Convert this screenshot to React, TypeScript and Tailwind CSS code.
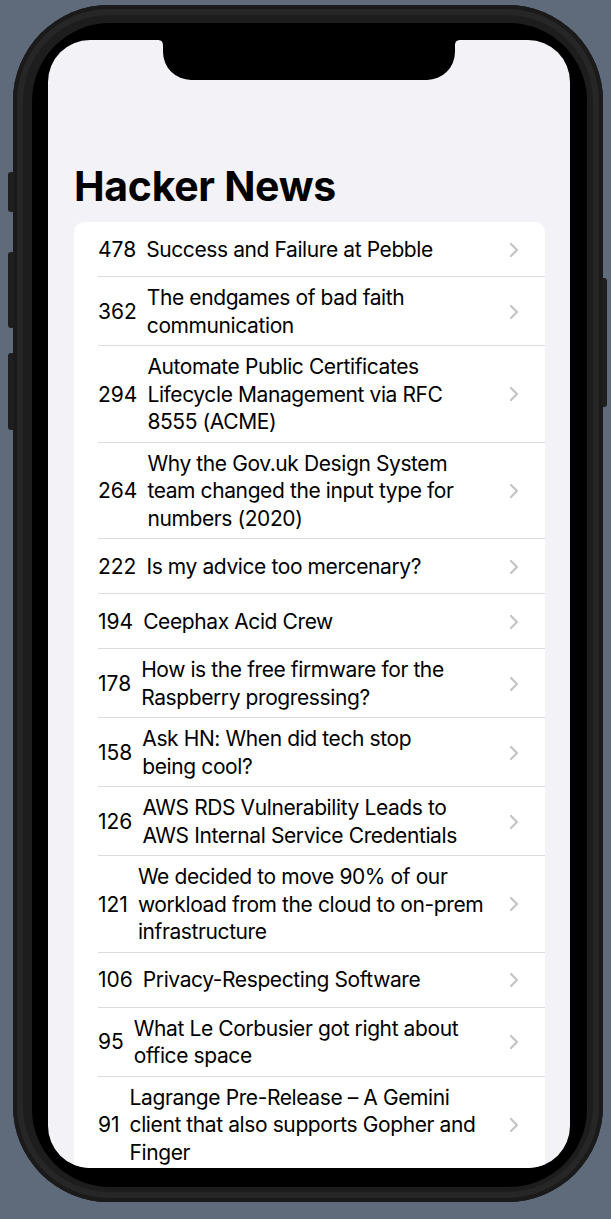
type Story = {
  score: number;
  lines: string[];
};

const stories: Story[] = [
  { score: 478, lines: ["Success and Failure at Pebble"] },
  { score: 362, lines: ["The endgames of bad faith", "communication"] },
  {
    score: 294,
    lines: [
      "Automate Public Certificates",
      "Lifecycle Management via RFC",
      "8555 (ACME)",
    ],
  },
  {
    score: 264,
    lines: [
      "Why the Gov.uk Design System",
      "team changed the input type for",
      "numbers (2020)",
    ],
  },
  { score: 222, lines: ["Is my advice too mercenary?"] },
  { score: 194, lines: ["Ceephax Acid Crew"] },
  {
    score: 178,
    lines: ["How is the free firmware for the", "Raspberry progressing?"],
  },
  { score: 158, lines: ["Ask HN: When did tech stop", "being cool?"] },
  {
    score: 126,
    lines: ["AWS RDS Vulnerability Leads to", "AWS Internal Service Credentials"],
  },
  {
    score: 121,
    lines: [
      "We decided to move 90% of our",
      "workload from the cloud to on-prem",
      "infrastructure",
    ],
  },
  { score: 106, lines: ["Privacy-Respecting Software"] },
  { score: 95, lines: ["What Le Corbusier got right about", "office space"] },
  {
    score: 91,
    lines: [
      "Lagrange Pre-Release – A Gemini",
      "client that also supports Gopher and",
      "Finger",
    ],
  },
];

function Chevron() {
  return (
    <svg width="10" height="16" viewBox="0 0 10 16" className="shrink-0">
      <path
        d="M2 2 L8 8 L2 14"
        fill="none"
        stroke="#c4c4c7"
        strokeWidth="2.2"
        strokeLinecap="round"
        strokeLinejoin="round"
      />
    </svg>
  );
}

function Notch() {
  // the cut-out at the top of the screen
  return (
    <svg
      width="304"
      height="40"
      viewBox="0 0 304 40"
      className="absolute left-[109px] top-0"
    >
      <path
        d="M0 0 H304 C299 0 298 2 298 6 V12 A28 28 0 0 1 270 40 H34 A28 28 0 0 1 6 12 V6 C6 2 5 0 0 0 Z"
        fill="#000"
      />
    </svg>
  );
}

function StoryRow({ story }: { story: Story }) {
  return (
    <div className="ml-[24px] flex min-h-[55px] items-center gap-[10px] border-b border-[#dcdcdf] pb-[6px] pr-[26px] pt-[7px]">
      <span className="shrink-0">{story.score}</span>
      <div className="flex-1 tracking-[-0.4px]">
        {story.lines.map((line, i) => (
          <div key={i} className="whitespace-nowrap">
            {line}
          </div>
        ))}
      </div>
      <Chevron />
    </div>
  );
}

export default function App() {
  return (
    <div className="min-h-[1219px] bg-[#5f6b7b] pl-[13px] pt-[5px] font-['Inter',sans-serif]">
      <div className="relative h-[1197px] w-[590px] rounded-[96px] bg-[#1d1d1d] pb-[15px] pl-[19px] pr-[16px] pt-[18px] shadow-[inset_0_0_0_4px_#1a1a1a,inset_0_0_0_10px_#262626]">
        {/* side buttons */}
        <div className="absolute left-[-5px] top-[167px] h-[40px] w-[6px] rounded-l-[3px] bg-[#1e1e1e]" />
        <div className="absolute left-[-5px] top-[247px] h-[76px] w-[6px] rounded-l-[3px] bg-[#1e1e1e]" />
        <div className="absolute left-[-5px] top-[348px] h-[77px] w-[6px] rounded-l-[3px] bg-[#1e1e1e]" />
        <div className="absolute right-[-4px] top-[273px] h-[129px] w-[5px] rounded-r-[3px] bg-[#1e1e1e]" />

        <div className="h-full w-full rounded-[78px] bg-black pb-[19px] pl-[16px] pr-[17px] pt-[17px]">
          <div className="relative h-full w-full overflow-hidden rounded-[42px] bg-[#f2f2f7]">
            <Notch />
            <h1 className="pl-[26px] pt-[122px] text-[41px] font-bold leading-[48px] tracking-[-0.3px] text-black">
              Hacker News
            </h1>
            <div className="ml-[26px] mr-[25px] mt-[12px] rounded-[10px] bg-white text-[21px] leading-[27.5px] text-black">
              {stories.map((story) => (
                <StoryRow key={story.score} story={story} />
              ))}
            </div>
          </div>
        </div>
      </div>
    </div>
  );
}
